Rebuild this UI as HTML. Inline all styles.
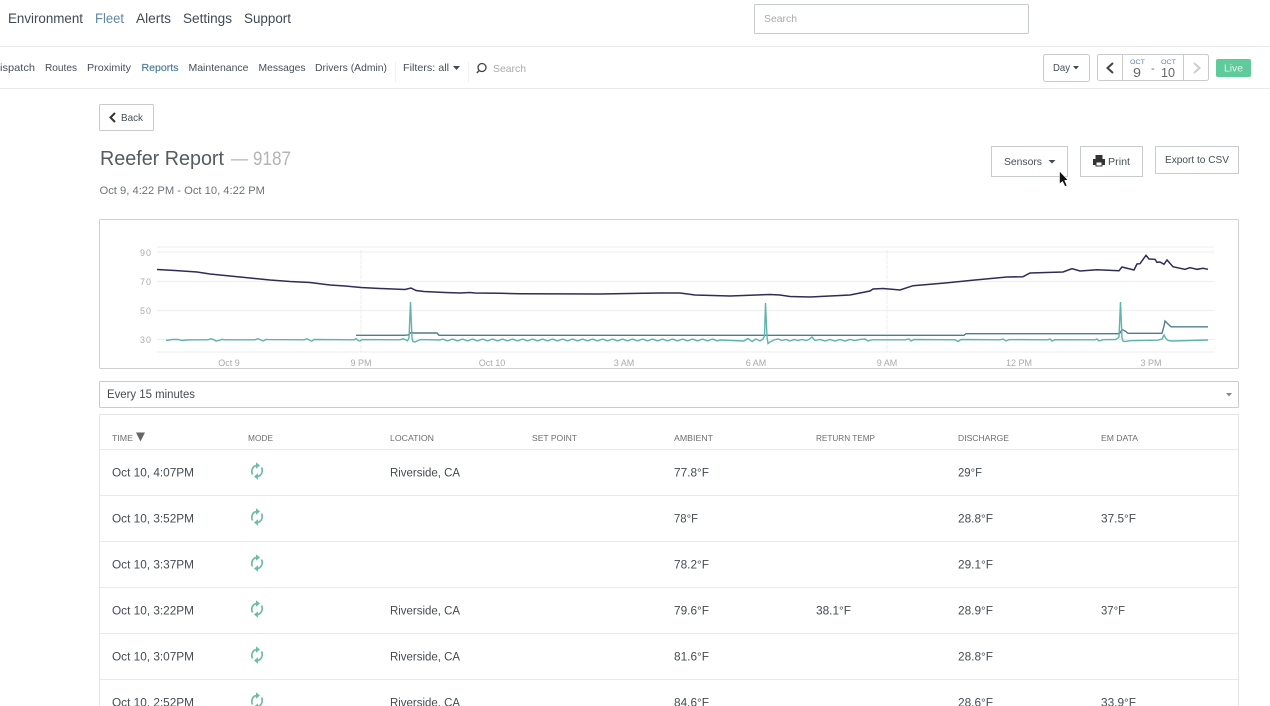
<!DOCTYPE html>
<html lang="en">
<head>
<meta charset="utf-8">
<title>Reefer Report</title>
<style>
html,body{margin:0;padding:0;background:#fff;width:1270px;height:706px;overflow:hidden}
svg{display:block;font-family:"Liberation Sans",sans-serif}
.n{font-size:13.5px;fill:#3f4a52}
.s{font-size:10.5px;fill:#454f56}
.b{fill:#fff;stroke:#c9cccf;stroke-width:1}
.g{stroke:#f0f0f0;stroke-width:1.2;fill:none}
.a{font-size:9px;fill:#aaa}
.h{font-size:8.5px;fill:#6e6e6e}
.c{font-size:11.5px;fill:#444c52}
.l{stroke:#e8e9ea;stroke-width:1;fill:none}
</style>
</head>
<body>
<svg width="1270" height="706" viewBox="0 0 1270 706" xmlns="http://www.w3.org/2000/svg">
<defs>
<g id="sync" fill="none" stroke="#6fbba5" stroke-width="1.7">
<path d="M-4.500 3.500A5.200 6 0 0 1 0 -5.500"/>
<path d="M4.500 -3.500A5.200 6 0 0 1 0 5.500"/>
<path d="M-1 -8.800L3 -5.500 -1 -2.300Z" fill="#6fbba5" stroke="none"/>
<path d="M1 8.800L-3 5.500 1 2.300Z" fill="#6fbba5" stroke="none"/>
</g>
</defs>

<!-- top nav -->
<text class="n" x="8" y="23" textLength="75" lengthAdjust="spacingAndGlyphs">Environment</text>
<text class="n" x="95" y="23" textLength="29" lengthAdjust="spacingAndGlyphs" style="fill:#5f87a3">Fleet</text>
<text class="n" x="136" y="23" textLength="35" lengthAdjust="spacingAndGlyphs">Alerts</text>
<text class="n" x="183" y="23" textLength="49" lengthAdjust="spacingAndGlyphs">Settings</text>
<text class="n" x="244" y="23" textLength="47" lengthAdjust="spacingAndGlyphs">Support</text>
<rect x="754.5" y="4.5" width="274" height="29" class="b" rx="1"/>
<text x="764" y="22" font-size="10" fill="#aaa" textLength="33" lengthAdjust="spacingAndGlyphs">Search</text>
<path d="M0 46.5H1270" class="l"/>

<!-- sub nav -->
<text class="s" x="0" y="71" textLength="35" lengthAdjust="spacingAndGlyphs">ispatch</text>
<text class="s" x="45" y="71" textLength="32" lengthAdjust="spacingAndGlyphs">Routes</text>
<text class="s" x="87" y="71" textLength="44" lengthAdjust="spacingAndGlyphs">Proximity</text>
<text class="s" x="141.500" y="71" textLength="37" lengthAdjust="spacingAndGlyphs" style="fill:#4f7d9c;stroke:#4f7d9c;stroke-width:.2">Reports</text>
<text class="s" x="188.500" y="71" textLength="60" lengthAdjust="spacingAndGlyphs">Maintenance</text>
<text class="s" x="258.500" y="71" textLength="47" lengthAdjust="spacingAndGlyphs">Messages</text>
<text class="s" x="315" y="71" textLength="72" lengthAdjust="spacingAndGlyphs">Drivers (Admin)</text>
<path d="M395.500 61V83M468.500 61V83" stroke="#f0f0f0" fill="none"/>
<text class="s" x="403" y="71" textLength="46" lengthAdjust="spacingAndGlyphs">Filters: all</text>
<path d="M453 66H460L456.500 70Z" fill="#3f4a52"/>
<circle cx="482" cy="67.500" r="4" fill="none" stroke="#444" stroke-width="1.300"/>
<path d="M479.300 70.500L476.800 73" stroke="#444" stroke-width="1.400"/>
<text x="493" y="72" font-size="10.500" fill="#aaa" textLength="33" lengthAdjust="spacingAndGlyphs">Search</text>

<rect x="1043.500" y="54.500" width="46" height="27" rx="2" class="b"/>
<text class="s" x="1053" y="71" textLength="17" lengthAdjust="spacingAndGlyphs">Day</text>
<path d="M1073 66H1079L1076 69.500Z" fill="#3f4a52"/>
<rect x="1097.500" y="54.500" width="111" height="26" rx="2" class="b"/>
<path d="M1122.500 55V80M1183.500 55V80" stroke="#c9cccf" fill="none"/>
<path d="M1113 63L1107.500 68 1113 73" fill="none" stroke="#444" stroke-width="2"/>
<path d="M1194 63L1199.500 68 1194 73" fill="none" stroke="#ccc" stroke-width="2"/>
<text x="1130" y="64" font-size="6.800" fill="#5f82a0" textLength="15" lengthAdjust="spacingAndGlyphs">OCT</text>
<text x="1161" y="64" font-size="6.800" fill="#5f82a0" textLength="15" lengthAdjust="spacingAndGlyphs">OCT</text>
<text x="1133" y="77" font-size="13" fill="#666" textLength="8" lengthAdjust="spacingAndGlyphs">9</text>
<text x="1151" y="72" font-size="11" fill="#666">-</text>
<text x="1161" y="77" font-size="13" fill="#666" textLength="14" lengthAdjust="spacingAndGlyphs">10</text>
<rect x="1216" y="59" width="35" height="18" rx="2" fill="#5fcb9b"/>
<text x="1224" y="71.500" font-size="10" fill="#dff5ea" textLength="19" lengthAdjust="spacingAndGlyphs">Live</text>
<path d="M0 88.500H1270" class="l"/>

<!-- header -->
<rect x="99.500" y="104.500" width="54" height="26" rx="1" class="b"/>
<path d="M115 113L110.500 117.500 115 122" fill="none" stroke="#333" stroke-width="2"/>
<text class="s" x="121" y="121" textLength="22" lengthAdjust="spacingAndGlyphs">Back</text>
<text x="100" y="165" font-size="20.500" fill="#555b5f" textLength="124" lengthAdjust="spacingAndGlyphs">Reefer Report</text>
<text x="231" y="165" font-size="19" fill="#b4b4b4" textLength="60" lengthAdjust="spacingAndGlyphs">— 9187</text>
<text x="99.500" y="194" font-size="11" fill="#6d7478" textLength="165.500" lengthAdjust="spacingAndGlyphs">Oct 9, 4:22 PM - Oct 10, 4:22 PM</text>

<rect x="991.500" y="146.500" width="76" height="30" class="b"/>
<text class="s" x="1004" y="165" textLength="38" lengthAdjust="spacingAndGlyphs">Sensors</text>
<path d="M1048.500 160H1055.500L1052 163.500Z" fill="#3f4a52"/>
<rect x="1080.500" y="146.500" width="62" height="30" class="b"/>
<path d="M1096 155H1102.500V159H1105V165H1102.500V166.500H1095.500V165H1093V159H1095.500V155Z" fill="#333"/>
<rect x="1096.500" y="162.500" width="5" height="3" fill="#fff"/>
<text class="s" x="1108" y="165" textLength="22" lengthAdjust="spacingAndGlyphs">Print</text>
<rect x="1155.500" y="146.500" width="83" height="27" class="b"/>
<text class="s" x="1165" y="163" textLength="64" lengthAdjust="spacingAndGlyphs">Export to CSV</text>

<!-- chart -->
<rect x="99.500" y="219.500" width="1139" height="149" rx="1" fill="#fff" stroke="#cfd1d3"/>
<path d="M157 247H1214M157 252H1214M157 281.500H1214M157 310.500H1214M157 339.500H1214M157 352H1214" class="g"/>
<path d="M361 250V352M887 250V352" stroke="#eeeeee" stroke-width="1" stroke-dasharray="4 1" fill="none"/>
<text class="a" x="140" y="256" textLength="11">90</text>
<text class="a" x="140" y="285" textLength="11">70</text>
<text class="a" x="140" y="314" textLength="11">50</text>
<text class="a" x="140" y="343" textLength="11">30</text>
<g class="a" text-anchor="middle">
<text x="229" y="366">Oct 9</text>
<text x="361" y="366">9 PM</text>
<text x="492" y="366">Oct 10</text>
<text x="624" y="366">3 AM</text>
<text x="756" y="366">6 AM</text>
<text x="887" y="366">9 AM</text>
<text x="1019" y="366">12 PM</text>
<text x="1151" y="366">3 PM</text>
</g>
<path fill="none" stroke="#4f7d90" stroke-width="1.400" d="M356 335.300H404L408 335 411 332.500 414 333H437L439 335.300H964L966 333.700H1118L1120 333 1122 329.500 1125 331 1128 333.300H1162L1164 326 1165 321 1168 324 1171 326.800H1208"/>
<path fill="none" stroke="#5fb3ad" stroke-width="1.400" d="M166 340.500L172 339.500 178 339.500 182 340.500 186 340 195 339.800 208 339.800 211 338.800 214 339.800 216 341 219 340.500 222 339.400 225 339.800 255 339.800 258 338.800 261 340 263 341 266 339.500 268 339.600 304 339.800 307 338.800 310 340.500 312 341 314 339.500 354 339.800 356 338.600 358 340.500 360 341 362 339.600 400 339.800 403 338.800 406 340 407.500 340.800 409 338 410.500 302 412 338 413 341.500 415 342 418 340.500 421 339.600 440 340 q2.500 -1.500 5 0 t5 0 t5 0 t5 0 t5 0 t5 0 t5 0 t5 0 t5 0 t5 0 t5 0 t5 0 t5 0 t5 0 t5 0 t5 0 t5 0 t5 0 t5 0 t5 0 t5 0 t5 0 t5 0 t5 0 t5 0 t5 0 t5 0 t5 0 t5 0 t5 0 t5 0 t5 0 t5 0 t5 0 t5 0 t5 0 t5 0 t5 0 t5 0 t5 0 t5 0 t5 0 t5 0 t5 0 t5 0 t5 0 t5 0 t5 0 t5 0 t5 0 t5 0 t5 0 t5 0 t5 0 t5 0 t5 0 L744 341 748 338.500 752 341.500 756 339 760 341 763 339 764.500 336 765.500 303 767 337 768 343.500 770 342 774 340 778 339 782 340.500 786 339.500 790 341 794 339.500 798 340.500 802 339.500 806 340.500 809 339.500 812 337 815 340.500 820 339.500 825 341 830 339.500 835 341 840 339.500 845 341 850 339.500 855 340.500 860 339.500 865 339 868 341 872 339.800 905 339.800 909 339 911 341 914 339.500 955 339.800 958 341.500 961 339.500 1000 339.800 1003 339 1006 341 1009 339.600 1048 339.800 1050 339 1052 341 1055 339.700 1095 339.800 1097 339 1099 341 1103 339.700 1116 339.500 1119 337 1120.500 302 1122 338 1123 341 1125 341.500 1130 340.700 1140 340.500 1158 340.200 1162 339 1164 335 1166 338.500 1168 340.500 1172 341 1190 340.500 1208 340"/>
<path fill="none" stroke="#2f2c55" stroke-width="1.500" d="M157 269.500L175 270.500 197 272 210 274 225 275.500 240 277 255 278.500 270 280 290 281.500 310 282.500 330 285 345 286 361 287.500 380 288.500 405 289.500 411 288 416 290.500 424 291.500 445 292.500 460 293 470 292.500 475 293 500 293.300 520 293.700 600 294 660 293 680 293 695 295 730 296 770 294.500 780 295 790 296.500 810 297 830 296 850 295 870 291 873 289 883 288.500 900 290 913 285.700 945 283 975 280 1007 277 1023 276.700 1030 273 1063 272 1072 268.700 1080 271 1097 269.700 1119 270.700 1122 267 1130 269 1134 270 1137 264 1140 263.700 1146 255.300 1149 259 1155 259.300 1157 262.300 1160 262 1164 264.300 1167 260 1173 266.700 1185 269.300 1190 267.700 1197 269.300 1203 268.300 1208 269.300"/>

<!-- select -->
<rect x="99.500" y="381.500" width="1139" height="26" rx="1" fill="#fff" stroke="#c9cccf"/>
<text class="c" x="107" y="398" textLength="88" lengthAdjust="spacingAndGlyphs">Every 15 minutes</text>
<path d="M1226 393H1232L1229 396.500Z" fill="#888"/>

<!-- table -->
<path d="M99.500 706V414.500H1238.500V706" fill="none" stroke="#e3e4e5"/>
<path d="M100 449.500H1238M100 495.500H1238M100 541.500H1238M100 587.500H1238M100 633.500H1238M100 679.500H1238" class="l"/>
<g class="h">
<text x="112" y="441" textLength="21" lengthAdjust="spacingAndGlyphs">TIME</text>
<text x="248" y="441" textLength="25" lengthAdjust="spacingAndGlyphs">MODE</text>
<text x="390" y="441" textLength="44" lengthAdjust="spacingAndGlyphs">LOCATION</text>
<text x="532" y="441" textLength="45" lengthAdjust="spacingAndGlyphs">SET POINT</text>
<text x="674" y="441" textLength="39" lengthAdjust="spacingAndGlyphs">AMBIENT</text>
<text x="816" y="441" textLength="59" lengthAdjust="spacingAndGlyphs">RETURN TEMP</text>
<text x="958" y="441" textLength="51" lengthAdjust="spacingAndGlyphs">DISCHARGE</text>
<text x="1101" y="441" textLength="37" lengthAdjust="spacingAndGlyphs">EM DATA</text>
</g>
<path d="M136 432.500H145L140.500 441.500Z" fill="#666"/>

<g class="c" transform="translate(0 .5)">
<text x="112" y="476" textLength="82" lengthAdjust="spacingAndGlyphs">Oct 10, 4:07PM</text>
<text x="390" y="476" textLength="70" lengthAdjust="spacingAndGlyphs">Riverside, CA</text>
<text x="674" y="476" textLength="35" lengthAdjust="spacingAndGlyphs">77.8°F</text>
<text x="958" y="476" textLength="24" lengthAdjust="spacingAndGlyphs">29°F</text>

<text x="112" y="522" textLength="82" lengthAdjust="spacingAndGlyphs">Oct 10, 3:52PM</text>
<text x="674" y="522" textLength="24" lengthAdjust="spacingAndGlyphs">78°F</text>
<text x="958" y="522" textLength="35" lengthAdjust="spacingAndGlyphs">28.8°F</text>
<text x="1101" y="522" textLength="35" lengthAdjust="spacingAndGlyphs">37.5°F</text>

<text x="112" y="568" textLength="82" lengthAdjust="spacingAndGlyphs">Oct 10, 3:37PM</text>
<text x="674" y="568" textLength="35" lengthAdjust="spacingAndGlyphs">78.2°F</text>
<text x="958" y="568" textLength="35" lengthAdjust="spacingAndGlyphs">29.1°F</text>

<text x="112" y="614" textLength="82" lengthAdjust="spacingAndGlyphs">Oct 10, 3:22PM</text>
<text x="390" y="614" textLength="70" lengthAdjust="spacingAndGlyphs">Riverside, CA</text>
<text x="674" y="614" textLength="35" lengthAdjust="spacingAndGlyphs">79.6°F</text>
<text x="816" y="614" textLength="35" lengthAdjust="spacingAndGlyphs">38.1°F</text>
<text x="958" y="614" textLength="35" lengthAdjust="spacingAndGlyphs">28.9°F</text>
<text x="1101" y="614" textLength="24" lengthAdjust="spacingAndGlyphs">37°F</text>

<text x="112" y="660" textLength="82" lengthAdjust="spacingAndGlyphs">Oct 10, 3:07PM</text>
<text x="390" y="660" textLength="70" lengthAdjust="spacingAndGlyphs">Riverside, CA</text>
<text x="674" y="660" textLength="35" lengthAdjust="spacingAndGlyphs">81.6°F</text>
<text x="958" y="660" textLength="35" lengthAdjust="spacingAndGlyphs">28.8°F</text>

<text x="112" y="706" textLength="82" lengthAdjust="spacingAndGlyphs">Oct 10, 2:52PM</text>
<text x="390" y="706" textLength="70" lengthAdjust="spacingAndGlyphs">Riverside, CA</text>
<text x="674" y="706" textLength="35" lengthAdjust="spacingAndGlyphs">84.6°F</text>
<text x="958" y="706" textLength="35" lengthAdjust="spacingAndGlyphs">28.6°F</text>
<text x="1101" y="706" textLength="35" lengthAdjust="spacingAndGlyphs">33.9°F</text>
</g>
<use href="#sync" x="257" y="471"/>
<use href="#sync" x="257" y="517"/>
<use href="#sync" x="257" y="563"/>
<use href="#sync" x="257" y="609"/>
<use href="#sync" x="257" y="655"/>
<use href="#sync" x="257" y="701"/>

<!-- cursor -->
<path d="M1059.500 171V184L1062.500 181.500 1065 186.500 1067 185.500 1064.700 180.500 1068 180Z" fill="#111" stroke="#fff" stroke-width=".6"/>
</svg>
</body>
</html>
